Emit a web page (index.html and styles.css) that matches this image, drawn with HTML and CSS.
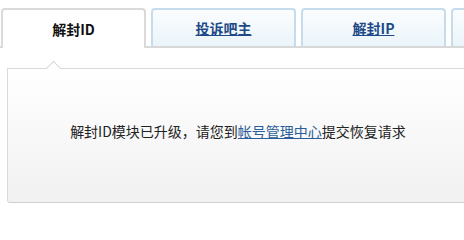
FILE: index.html
```html
<!DOCTYPE html>
<html lang="zh-CN">
<head>
<meta charset="utf-8">
<title>解封ID</title>
<link rel="stylesheet" href="styles.css">
</head>
<body>
<div class="page">
  <ul class="tabs">
    <li class="tab active"><span class="tab-label">解封ID</span></li>
    <li class="tab"><a class="tab-label" href="#">投诉吧主</a></li>
    <li class="tab"><a class="tab-label" href="#">解封IP</a></li>
    <li class="tab"></li>
  </ul>
  <div class="panel">
    <span class="notch"></span>
    <p class="message">解封ID模块已升级，请您到<a class="link" href="#">帐号管理中心</a>提交恢复请求</p>
  </div>
</div>
</body>
</html>
```

FILE: styles.css
```css
html, body {
  margin: 0;
  padding: 0;
  background: #ffffff;
}

body {
  font-family: "Noto Sans CJK SC", "Noto Sans", sans-serif;
  color: #222;
  overflow: hidden;
}

.page {
  width: 464px;
  height: 209px;
  overflow: hidden;
}

.tabs {
  list-style: none;
  margin: 0;
  padding: 8px 0 0 1px;
  display: flex;
  gap: 5px;
  border-bottom: 2px solid #d8d8d8;
  height: 38px;
}

.tab {
  flex: 0 0 145px;
  box-sizing: border-box;
  height: 38px;
  border: 2px solid #c6dcec;
  border-bottom: none;
  border-radius: 4px 4px 0 0;
  background: linear-gradient(#fbfdfe, #eaf4fa);
  display: flex;
  align-items: center;
  justify-content: center;
}

.tab.active {
  height: 40px;
  border-color: #dadada;
  background: #ffffff;
  position: relative;
  z-index: 1;
}

.tab-label {
  font-size: 14px;
  font-weight: bold;
  line-height: 18px;
  color: #1d4a87;
  text-decoration: underline;
  margin-bottom: 1px;
}

.tab.active .tab-label {
  color: #111;
  text-decoration: none;
}

.panel {
  position: relative;
  box-sizing: border-box;
  margin: 20px 0 0 7px;
  width: 462px;
  height: 135px;
  border: 1px solid #dadada;
  border-bottom-color: #cfcfcf;
  border-radius: 0 0 3px 3px;
  background: linear-gradient(#ffffff, #f1f1f1);
  display: flex;
  align-items: center;
  justify-content: center;
  padding-bottom: 9px;
}

.notch {
  position: absolute;
  top: -6px;
  left: 40px;
  width: 10px;
  height: 10px;
  background: #ffffff;
  border-top: 1px solid #d6d6d6;
  border-left: 1px solid #d6d6d6;
  transform: rotate(45deg);
}

.message {
  margin: 0;
  font-size: 14px;
  line-height: 18px;
  color: #222;
  white-space: nowrap;
}

.link {
  color: #2a5d9a;
  text-decoration: underline;
}
```
